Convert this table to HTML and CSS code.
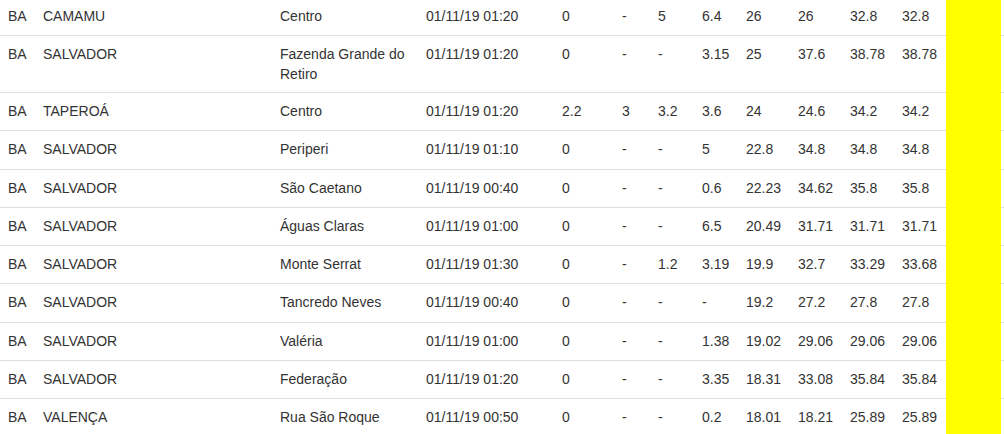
FILE: index.html
```html
<!DOCTYPE html>
<html lang="pt">
<head>
<meta charset="utf-8">
<title>Tabela</title>
<link rel="stylesheet" href="styles.css">
</head>
<body>
<table class="tbl">
  <colgroup>
    <col class="c-uf"><col class="c-city"><col class="c-bairro"><col class="c-date">
    <col class="c-a"><col class="c-b"><col class="c-c"><col class="c-d">
    <col class="c-e"><col class="c-f"><col class="c-g"><col class="c-h"><col class="c-flag">
  </colgroup>
  <tbody>
    <tr><td>BA</td><td>CAMAMU</td><td>Centro</td><td>01/11/19 01:20</td><td>0</td><td>-</td><td>5</td><td>6.4</td><td>26</td><td>26</td><td>32.8</td><td>32.8</td><td class="flag"></td></tr>
    <tr><td>BA</td><td>SALVADOR</td><td>Fazenda Grande do Retiro</td><td>01/11/19 01:20</td><td>0</td><td>-</td><td>-</td><td>3.15</td><td>25</td><td>37.6</td><td>38.78</td><td>38.78</td><td class="flag"></td></tr>
    <tr><td>BA</td><td>TAPEROÁ</td><td>Centro</td><td>01/11/19 01:20</td><td>2.2</td><td>3</td><td>3.2</td><td>3.6</td><td>24</td><td>24.6</td><td>34.2</td><td>34.2</td><td class="flag"></td></tr>
    <tr><td>BA</td><td>SALVADOR</td><td>Periperi</td><td>01/11/19 01:10</td><td>0</td><td>-</td><td>-</td><td>5</td><td>22.8</td><td>34.8</td><td>34.8</td><td>34.8</td><td class="flag"></td></tr>
    <tr><td>BA</td><td>SALVADOR</td><td>São Caetano</td><td>01/11/19 00:40</td><td>0</td><td>-</td><td>-</td><td>0.6</td><td>22.23</td><td>34.62</td><td>35.8</td><td>35.8</td><td class="flag"></td></tr>
    <tr><td>BA</td><td>SALVADOR</td><td>Águas Claras</td><td>01/11/19 01:00</td><td>0</td><td>-</td><td>-</td><td>6.5</td><td>20.49</td><td>31.71</td><td>31.71</td><td>31.71</td><td class="flag"></td></tr>
    <tr><td>BA</td><td>SALVADOR</td><td>Monte Serrat</td><td>01/11/19 01:30</td><td>0</td><td>-</td><td>1.2</td><td>3.19</td><td>19.9</td><td>32.7</td><td>33.29</td><td>33.68</td><td class="flag"></td></tr>
    <tr><td>BA</td><td>SALVADOR</td><td>Tancredo Neves</td><td>01/11/19 00:40</td><td>0</td><td>-</td><td>-</td><td>-</td><td>19.2</td><td>27.2</td><td>27.8</td><td>27.8</td><td class="flag"></td></tr>
    <tr><td>BA</td><td>SALVADOR</td><td>Valéria</td><td>01/11/19 01:00</td><td>0</td><td>-</td><td>-</td><td>1.38</td><td>19.02</td><td>29.06</td><td>29.06</td><td>29.06</td><td class="flag"></td></tr>
    <tr><td>BA</td><td>SALVADOR</td><td>Federação</td><td>01/11/19 01:20</td><td>0</td><td>-</td><td>-</td><td>3.35</td><td>18.31</td><td>33.08</td><td>35.84</td><td>35.84</td><td class="flag"></td></tr>
    <tr><td>BA</td><td>VALENÇA</td><td>Rua São Roque</td><td>01/11/19 00:50</td><td>0</td><td>-</td><td>-</td><td>0.2</td><td>18.01</td><td>18.21</td><td>25.89</td><td>25.89</td><td class="flag"></td></tr>
  </tbody>
</table>
</body>
</html>
```
FILE: styles.css
```css
* { box-sizing: border-box; }
html, body { margin: 0; padding: 0; background: #fff; overflow: hidden; }
body {
  font-family: "Liberation Sans", Arial, Helvetica, sans-serif;
  font-size: 14px;
  line-height: 20px;
  color: #333;
}
.tbl {
  border-collapse: collapse;
  border-spacing: 0;
  table-layout: fixed;
  width: 1004px;
  margin-top: -3.25px;
}
.tbl td {
  padding: 8px;
  vertical-align: top;
  border-top: 1px solid #ddd;
  height: 38.25px;
}
.tbl td.flag {
  position: relative;
}
.tbl td.flag::before {
  content: "";
  position: absolute;
  left: 0;
  right: 3px;
  top: -1px;
  bottom: 0;
  background: #ffff00;
}
.c-uf { width: 35px; }
.c-city { width: 237px; }
.c-bairro { width: 146px; }
.c-date { width: 136px; }
.c-a { width: 60px; }
.c-b { width: 36px; }
.c-c { width: 44px; }
.c-d { width: 44px; }
.c-e { width: 52px; }
.c-f { width: 52px; }
.c-g { width: 52px; }
.c-h { width: 52px; }
.c-flag { width: 58px; }
```
